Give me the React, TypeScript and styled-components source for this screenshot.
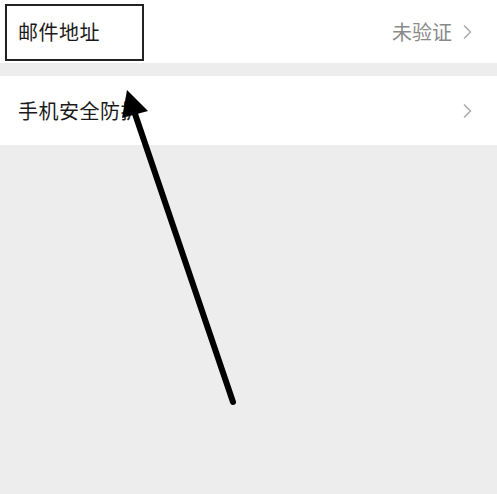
import React from "react";
import styled, { createGlobalStyle } from "styled-components";

const Global = createGlobalStyle`
  html, body { margin: 0; padding: 0; background: #ededed; }
  body { font-family: "Noto Sans CJK SC", "Noto Sans", sans-serif; }
`;

const Page = styled.div`
  position: relative;
  width: 497px;
  height: 494px;
  background: #ededed;
  overflow: hidden;
`;

const Group = styled.div<{ $gap: number }>`
  margin-top: ${(p) => p.$gap}px;
  background: #fff;
`;

const Row = styled.div<{ $h: number }>`
  height: ${(p) => p.$h}px;
  display: flex;
  align-items: center;
  padding: 0 25px 0 18px;
`;

const Label = styled.div`
  flex: 1;
  font-size: 20px;
  color: #1a1a1a;
  letter-spacing: 0.5px;
`;

const Value = styled.div`
  font-size: 20px;
  color: #8a8a8a;
  margin-right: 10px;
`;

const Chevron = () => (
  <svg width="10" height="16" viewBox="0 0 10 16">
    <polyline points="2,1.5 8.5,8 2,14.5" fill="none" stroke="#ababab" strokeWidth="1.5" />
  </svg>
);

const Highlight = styled.div`
  position: absolute;
  left: 5px;
  top: 4px;
  width: 135px;
  height: 53px;
  border: 2px solid #222;
`;

const ArrowLayer = styled.svg`
  position: absolute;
  left: 0;
  top: 0;
  pointer-events: none;
`;

export default function App() {
  return (
    <>
      <Global />
      <Page>
        <Group $gap={0}>
          <Row $h={63}>
            <Label>邮件地址</Label>
            <Value>未验证</Value>
            <Chevron />
          </Row>
        </Group>
        <Group $gap={13}>
          <Row $h={69}>
            <Label>手机安全防护</Label>
            <Chevron />
          </Row>
        </Group>
        <Highlight />
        <ArrowLayer width="497" height="494" viewBox="0 0 497 494">
          <line x1="233" y1="402" x2="133" y2="108" stroke="#000" strokeWidth="6" strokeLinecap="round" />
          <polygon points="127,90 122,118 148,111" fill="#000" />
        </ArrowLayer>
      </Page>
    </>
  );
}
